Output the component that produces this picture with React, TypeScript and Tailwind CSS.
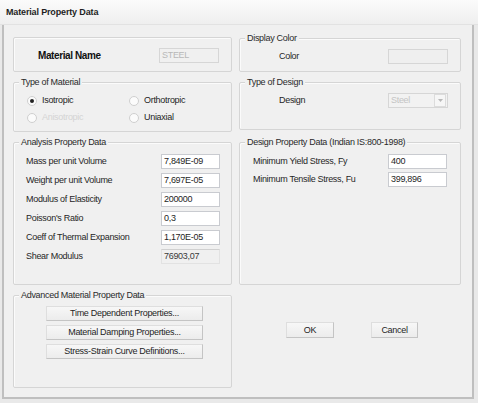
import React from 'react';

const GroupBox: React.FC<{ title?: string; className?: string; children?: React.ReactNode }> = ({ title, className = '', children }) => (
  <div className={`relative border border-[#d5d5d5] rounded-[2px] shadow-[inset_1px_1px_0_#fbfbfb] ${className}`}>
    {title && (
      <span className="absolute -top-[7px] left-[5px] bg-[#f0f0f0] px-[2px] leading-[12px] text-[#2a2a2a]">{title}</span>
    )}
    {children}
  </div>
);

const TextBox: React.FC<{ value: string; disabled?: boolean; className?: string }> = ({ value, disabled, className = '' }) => (
  <div
    className={`h-[15px] flex items-center px-[2px] leading-none border ${
      disabled ? 'bg-[#f0f0f0] border-[#d6d6d6] text-[#b8b8b8]' : 'bg-white border-[#c9cbd0] text-[#1e1e1e]'
    } ${className}`}
  >
    {value}
  </div>
);

const Radio: React.FC<{ label: string; checked?: boolean; disabled?: boolean }> = ({ label, checked, disabled }) => (
  <div className="flex items-center gap-[5px] h-[12px]">
    <span className="w-[10px] h-[10px] rounded-full border border-[#cfcfcf] bg-[#fbfbfb] flex items-center justify-center">
      {checked && <span className="w-[4px] h-[4px] rounded-full bg-[#222]" />}
    </span>
    <span className={disabled ? 'text-[#d4d4d4]' : 'text-[#1e1e1e]'}>{label}</span>
  </div>
);

const Button: React.FC<{ label: string; className?: string }> = ({ label, className = '' }) => (
  <div
    className={`h-[15px] flex items-center justify-center bg-gradient-to-b from-[#f7f7f7] to-[#ececec] border border-[#dedede] border-r-[#c4c4c4] border-b-[#c4c4c4] text-[#1e1e1e] leading-none ${className}`}
  >
    {label}
  </div>
);

const PropRow: React.FC<{ label: string; value: string; disabled?: boolean; inputW: string; labelW: string }> = ({
  label,
  value,
  disabled,
  inputW,
  labelW,
}) => (
  <div className="flex items-center h-[15px]">
    <span className={`${labelW} text-[#262626]`}>{label}</span>
    <TextBox value={value} disabled={disabled} className={inputW} />
  </div>
);

export default function App() {
  return (
    <div className="w-[478px] h-[403px] bg-[#e9e9e9] flex flex-col font-['Liberation_Sans',Arial,sans-serif] text-[9px] tracking-[-0.3px] overflow-hidden">
      {/* title bar */}
      <div className="h-[25px] flex items-center pl-[6px] pt-[2px] bg-gradient-to-b from-[#fbfbfb] to-[#efefef] border-b border-[#e2e2e2]">
        <span className="font-bold text-[#1e1e1e] tracking-[-0.15px]">Material Property Data</span>
      </div>

      <div className="flex-1 flex pl-[2px] pr-[4px] pb-[4px]">
        <div className="flex-1 flex border-l-2 border-r-2 border-b-2 border-[#bfbfbf] bg-[#f0f0f0] pl-[9px] pr-[7px] pt-[12px] pb-[7px] gap-[7px]">
          {/* left column */}
          <div className="w-[219px] flex flex-col gap-[10px]">
            <GroupBox className="h-[35px] flex items-center pt-[2px]">
              <span className="ml-[24px] w-[121px] font-bold text-[10px] tracking-[-0.4px] text-[#111]">Material Name</span>
              <TextBox value="STEEL" disabled className="w-[60px]" />
            </GroupBox>

            <GroupBox title="Type of Material" className="h-[50px] pl-[13px] pt-[12px]">
              <div className="grid grid-cols-[102px_auto] gap-y-[5px]">
                <Radio label="Isotropic" checked />
                <Radio label="Orthotropic" />
                <Radio label="Anisotropic" disabled />
                <Radio label="Uniaxial" />
              </div>
            </GroupBox>

            <GroupBox title="Analysis Property Data" className="h-[143px] pl-[12px] pt-[11px] flex flex-col gap-[4px]">
              <PropRow label="Mass per unit Volume" value="7,849E-09" labelW="w-[135px]" inputW="w-[59px]" />
              <PropRow label="Weight per unit Volume" value="7,697E-05" labelW="w-[135px]" inputW="w-[59px]" />
              <PropRow label="Modulus of Elasticity" value="200000" labelW="w-[135px]" inputW="w-[59px]" />
              <PropRow label="Poisson's Ratio" value="0,3" labelW="w-[135px]" inputW="w-[59px]" />
              <PropRow label="Coeff of Thermal Expansion" value="1,170E-05" labelW="w-[135px]" inputW="w-[59px]" />
              <div className="flex items-center h-[15px]">
                <span className="w-[135px] text-[#262626]">Shear Modulus</span>
                <div className="w-[59px] h-[15px] flex items-center px-[2px] border border-[#e2e2e2] border-t-[#d0d0d0] text-[#3a3a3a]">
                  76903,07
                </div>
              </div>
            </GroupBox>

            <GroupBox title="Advanced Material Property Data" className="h-[93px] pl-[32px] pt-[10px] flex flex-col gap-[4px]">
              <Button label="Time Dependent Properties..." className="w-[157px]" />
              <Button label="Material Damping Properties..." className="w-[157px]" />
              <Button label="Stress-Strain Curve Definitions..." className="w-[157px]" />
            </GroupBox>
          </div>

          {/* right column */}
          <div className="w-[222px] flex flex-col">
            <GroupBox title="Display Color" className="h-[34px] mt-[1px] flex items-center pt-[3px]">
              <span className="ml-[39px] w-[109px] text-[#262626]">Color</span>
              <div className="w-[60px] h-[15px] border border-[#d6d6d6] bg-[#efefef]" />
            </GroupBox>

            <GroupBox title="Type of Design" className="h-[48px] mt-[10px] flex items-start pt-[10px]">
              <span className="ml-[39px] w-[109px] h-[15px] flex items-center text-[#262626]">Design</span>
              <div className="w-[60px] h-[15px] border border-[#d6d6d6] bg-[#f2f2f2] flex items-center">
                <span className="flex-1 pl-[2px] text-[#c4c4c4]">Steel</span>
                <span className="w-[12px] h-[13px] mr-[1px] border border-[#dcdcdc] bg-[#f6f6f6] flex items-center justify-center">
                  <svg width="5" height="3" viewBox="0 0 5 3">
                    <path d="M0 0 L5 0 L2.5 3 Z" fill="#b8b8b8" />
                  </svg>
                </span>
              </div>
            </GroupBox>

            <GroupBox title="Design Property Data (Indian IS:800-1998)" className="h-[143px] mt-[12px] pl-[13px] pt-[11px] flex flex-col gap-[3px]">
              <PropRow label="Minimum Yield Stress, Fy" value="400" labelW="w-[135px]" inputW="w-[59px]" />
              <PropRow label="Minimum Tensile Stress, Fu" value="399,896" labelW="w-[135px]" inputW="w-[59px]" />
            </GroupBox>

            <div className="flex pl-[47px] pt-[37px] gap-[37px]">
              <Button label="OK" className="w-[48px] h-[16px]" />
              <Button label="Cancel" className="w-[47px] h-[16px]" />
            </div>
          </div>
        </div>
      </div>
    </div>
  );
}
